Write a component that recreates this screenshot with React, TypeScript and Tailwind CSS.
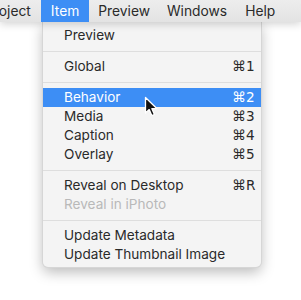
type Row =
  | { kind: 'item'; label: string; shortcut?: string; active?: boolean; disabled?: boolean }
  | { kind: 'sep' }

const rows: Row[] = [
  { kind: 'item', label: 'Preview' },
  { kind: 'sep' },
  { kind: 'item', label: 'Global', shortcut: '⌘1' },
  { kind: 'sep' },
  { kind: 'item', label: 'Behavior', shortcut: '⌘2', active: true },
  { kind: 'item', label: 'Media', shortcut: '⌘3' },
  { kind: 'item', label: 'Caption', shortcut: '⌘4' },
  { kind: 'item', label: 'Overlay', shortcut: '⌘5' },
  { kind: 'sep' },
  { kind: 'item', label: 'Reveal on Desktop', shortcut: '⌘R' },
  { kind: 'item', label: 'Reveal in iPhoto', disabled: true },
  { kind: 'sep' },
  { kind: 'item', label: 'Update Metadata' },
  { kind: 'item', label: 'Update Thumbnail Image' },
]

function Cursor() {
  return (
    <svg className="absolute left-[144px] top-[96px]" width="16" height="22" viewBox="0 0 16 22">
      <path
        d="M1.5 1.5 L1.5 17 L5.2 13.6 L7.8 19.6 L10.4 18.5 L7.9 12.7 L12.8 12.5 Z"
        fill="#111"
        stroke="#fff"
        strokeWidth="1.3"
        strokeLinejoin="round"
      />
    </svg>
  )
}

export default function App() {
  return (
    <div
      className="relative w-[301px] h-[300px] overflow-hidden bg-white text-[#2a2a2a]"
      style={{ fontFamily: 'Inter, Roboto, sans-serif' }}
    >
      {/* menu bar */}
      <div className="relative z-10 flex h-[22px] items-center bg-gradient-to-b from-[#ededed] to-[#e3e3e3] text-[13.8px] shadow-[0_2px_8px_rgba(0,0,0,0.18)]">
        <span className="-ml-[15px] pr-[10px]">Project</span>
        <span className="flex h-full items-center bg-[#3d8ef5] px-[10px] text-white">Item</span>
        <span className="pl-[9px] pr-[17px]">Preview</span>
        <span className="pr-[18px]">Windows</span>
        <span>Help</span>
      </div>

      {/* dropdown */}
      <div className="ml-[43px] w-[218px] rounded-b-[5px] bg-[#f4f4f4] pt-[4px] pb-[3px] text-[13.6px] shadow-[0_5px_14px_rgba(0,0,0,0.28)] ring-1 ring-[#d6d6d6]">
        {rows.map((r, i) =>
          r.kind === 'sep' ? (
            <div key={i} className="flex h-[12px] items-center">
              <div className="h-px w-full bg-[#dedede]" />
            </div>
          ) : (
            <div
              key={i}
              className={
                'flex h-[19px] items-center pl-[21px] pr-[9px] ' +
                (r.active ? 'bg-[#3d8ef5] text-white' : r.disabled ? 'text-[#b9b9b9]' : '')
              }
            >
              <span className="flex-1 whitespace-nowrap">{r.label}</span>
              {r.shortcut && (
                <span className="w-[20px] whitespace-nowrap" style={{ fontFamily: '"DejaVu Sans", sans-serif' }}>
                  <span className="text-[14px]">⌘</span>
                  {r.shortcut.slice(1)}
                </span>
              )}
            </div>
          )
        )}
      </div>

      <Cursor />
    </div>
  )
}
